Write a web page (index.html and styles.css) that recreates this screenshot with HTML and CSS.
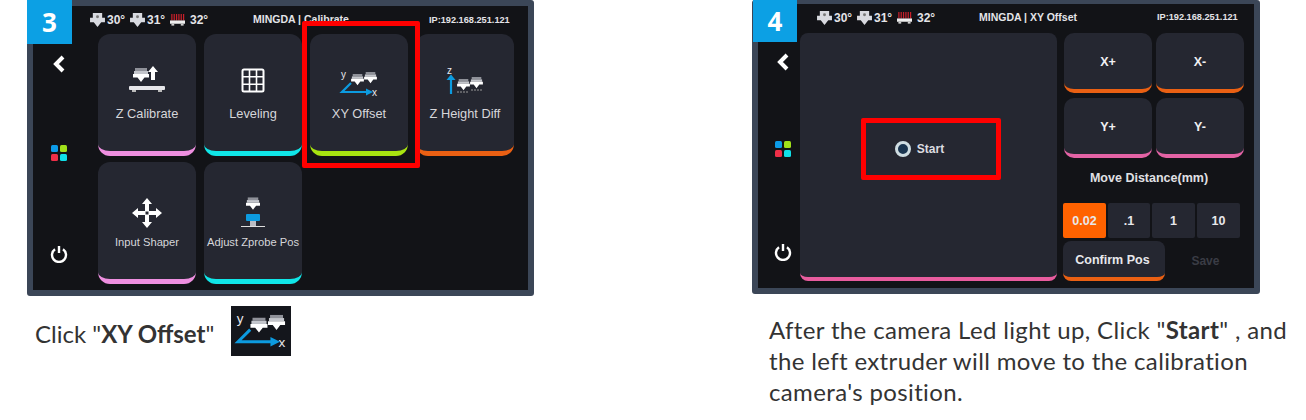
FILE: index.html
```html
<!DOCTYPE html>
<html lang="en">
<head>
    <meta charset="UTF-8">
    <meta name="viewport" content="width=device-width, initial-scale=1.0">
    <title>XY Offset Calibration</title>
    <link rel="stylesheet" href="styles.css">
</head>
<body>
    <!-- Shared icon parts -->
    <svg class="defs" width="0" height="0">
        <symbol id="nozzle" viewBox="0 0 16 15">
            <rect x="2" y="0" width="12" height="3" fill="#8f9199"/>
            <rect x="1" y="3" width="14" height="3" fill="#c4c6cc"/>
            <path d="M0 6h16v3.500h-4.500L8 14 4.500 9.500H0z" fill="#fff"/>
        </symbol>
        <symbol id="temp-nozzle" viewBox="0 0 16 15">
            <path d="M3 0h10v5h3v5h-4l-4 5-4-5H0V5h3z" fill="#d8dae0"/>
            <circle cx="8" cy="4" r="1.600" fill="#777"/>
        </symbol>
        <symbol id="temp-bed" viewBox="0 0 16 13">
            <path d="M2 0v7M4.500 0v7M7 0v7M9.500 0v7M12 0v7M14.500 0v7" stroke="#c8202a" stroke-width="1.300"/>
            <rect x="0" y="7" width="16" height="3.500" fill="#eee"/>
            <rect x="1.500" y="10.500" width="3" height="2" fill="#ccc"/>
            <rect x="11.500" y="10.500" width="3" height="2" fill="#ccc"/>
        </symbol>
        <symbol id="xy-icon" viewBox="0 0 40 28">
            <use href="#nozzle" x="12" y="4" width="13" height="12"/>
            <use href="#nozzle" x="25" y="2" width="13" height="12"/>
            <path d="M12 13 3 22H28" fill="none" stroke="#0c9be0" stroke-width="2.200"/>
            <path d="M27 18.500 34 22 27 25.500z" fill="#0c9be0"/>
        </symbol>
    </svg>

    <div class="steps">
        <!-- Step 3 -->
        <section class="step step-left">
            <div class="panel panel-calibrate">
                <div class="badge">3</div>
                <div class="topbar">
                    <div class="temps">
                        <svg class="t-icon"><use href="#temp-nozzle"/></svg><span class="t-val">30°</span>
                        <svg class="t-icon"><use href="#temp-nozzle"/></svg><span class="t-val">31°</span>
                        <svg class="t-icon"><use href="#temp-bed"/></svg><span class="t-val bed-val">32°</span>
                    </div>
                    <div class="title">MINGDA | Calibrate</div>
                    <div class="ip">IP:192.168.251.121</div>
                </div>
                <div class="body">
                    <div class="sidebar">
                        <svg class="back" width="14" height="18" viewBox="0 0 14 18"><path d="M11 2 4 9l7 7" fill="none" stroke="#fff" stroke-width="4"/></svg>
                        <div class="apps"><i class="c-blue"></i><i class="c-lime"></i><i class="c-red"></i><i class="c-cyan"></i></div>
                        <svg class="power" width="18" height="18" viewBox="0 0 18 18"><path d="M5 4.200a7 7 0 1 0 8 0" fill="none" stroke="#fff" stroke-width="2.400"/><path d="M9 1v7" stroke="#fff" stroke-width="2.400"/></svg>
                    </div>
                    <div class="menu">
                        <div class="tile bar-pink">
                            <svg class="tile-icon" viewBox="0 0 44 34">
                                <use href="#nozzle" x="8" y="4" width="16" height="15"/>
                                <path d="M26 16V8h-3l5-6 5 6h-3v8z" fill="#fff"/>
                                <rect x="4" y="22" width="36" height="4" rx="1" fill="#e6e6ea"/>
                                <rect x="7" y="26" width="4" height="2" fill="#bbb"/>
                                <rect x="33" y="26" width="4" height="2" fill="#bbb"/>
                            </svg>
                            <div class="tile-label">Z Calibrate</div>
                        </div>
                        <div class="tile bar-cyan">
                            <svg class="tile-icon" viewBox="0 0 44 34">
                                <rect x="11.500" y="5.500" width="21" height="22" rx="1.500" fill="none" stroke="#fff" stroke-width="2"/>
                                <path d="M18.500 5.500v22M25.500 5.500v22M11.500 12.800h21M11.500 20.200h21" stroke="#fff" stroke-width="1.600"/>
                            </svg>
                            <div class="tile-label">Leveling</div>
                        </div>
                        <div class="tile bar-lime">
                            <svg class="tile-icon xy-small" viewBox="0 0 40 28">
                                <use href="#xy-icon"/>
                                <text x="2" y="8" class="axis">y</text>
                                <text x="33" y="25.500" class="axis">x</text>
                            </svg>
                            <div class="tile-label">XY Offset</div>
                        </div>
                        <div class="tile bar-orange">
                            <svg class="tile-icon" viewBox="0 0 44 34">
                                <text x="4" y="10" class="axis">z</text>
                                <path d="M8 30V15" stroke="#0c9be0" stroke-width="2.200"/>
                                <path d="M3.500 16 8 10.500 12.500 16z" fill="#0c9be0"/>
                                <use href="#nozzle" x="14" y="15" width="13" height="12"/>
                                <use href="#nozzle" x="27" y="13" width="13" height="12"/>
                                <path d="M14 28h12M28 26h12" stroke="#999" stroke-width="1" stroke-dasharray="2 1"/>
                            </svg>
                            <div class="tile-label">Z Height Diff</div>
                        </div>
                        <div class="tile bar-pink">
                            <svg class="tile-icon low" viewBox="0 0 44 34">
                                <path d="M22 2l5 6h-3v7h7v-3l6 5-6 5v-3h-7v7h3l-5 6-5-6h3v-7h-7v3l-6-5 6-5v3h7V8h-3z" fill="#fff"/>
                                <rect x="20.500" y="15.500" width="3" height="3" fill="#252731"/>
                            </svg>
                            <div class="tile-label label-sm">Input Shaper</div>
                        </div>
                        <div class="tile bar-cyan">
                            <svg class="tile-icon low" viewBox="0 0 44 34">
                                <use href="#nozzle" x="15" y="1" width="14" height="14"/>
                                <rect x="15" y="18" width="14" height="7" rx="1" fill="#0c9be0"/>
                                <rect x="19" y="25" width="6" height="5" fill="#b9bbc2"/>
                                <path d="M10 30.500h24" stroke="#ddd" stroke-width="1"/>
                            </svg>
                            <div class="tile-label label-sm">Adjust Zprobe Pos</div>
                        </div>
                    </div>
                </div>
                <div class="mark mark-xy"></div>
            </div>
            <div class="caption caption-row">
                <p>Click "<b>XY Offset</b>"</p>
                <div class="thumb">
                    <svg class="thumb-icon" viewBox="0 0 40 28">
                        <use href="#xy-icon"/>
                        <text x="2" y="8" class="axis">y</text>
                        <text x="33" y="25.500" class="axis">x</text>
                    </svg>
                </div>
            </div>
        </section>

        <!-- Step 4 -->
        <section class="step step-right">
            <div class="panel panel-offset">
                <div class="badge">4</div>
                <div class="topbar">
                    <div class="temps">
                        <svg class="t-icon"><use href="#temp-nozzle"/></svg><span class="t-val">30°</span>
                        <svg class="t-icon"><use href="#temp-nozzle"/></svg><span class="t-val">31°</span>
                        <svg class="t-icon"><use href="#temp-bed"/></svg><span class="t-val bed-val">32°</span>
                    </div>
                    <div class="title">MINGDA | XY Offset</div>
                    <div class="ip">IP:192.168.251.121</div>
                </div>
                <div class="body">
                    <div class="sidebar">
                        <svg class="back" width="14" height="18" viewBox="0 0 14 18"><path d="M11 2 4 9l7 7" fill="none" stroke="#fff" stroke-width="4"/></svg>
                        <div class="apps"><i class="c-blue"></i><i class="c-lime"></i><i class="c-red"></i><i class="c-cyan"></i></div>
                        <svg class="power" width="18" height="18" viewBox="0 0 18 18"><path d="M5 4.200a7 7 0 1 0 8 0" fill="none" stroke="#fff" stroke-width="2.400"/><path d="M9 1v7" stroke="#fff" stroke-width="2.400"/></svg>
                    </div>
                    <div class="camera">
                        <div class="radio"></div>
                        <span>Start</span>
                    </div>
                    <div class="controls">
                        <div class="moves">
                            <div class="move bar-orange">X+</div>
                            <div class="move bar-orange">X-</div>
                            <div class="move bar-rose">Y+</div>
                            <div class="move bar-rose">Y-</div>
                        </div>
                        <div class="dist-title">Move Distance(mm)</div>
                        <div class="dists">
                            <div class="dist active">0.02</div>
                            <div class="dist">.1</div>
                            <div class="dist">1</div>
                            <div class="dist">10</div>
                        </div>
                        <div class="actions">
                            <div class="confirm bar-orange">Confirm Pos</div>
                            <div class="save">Save</div>
                        </div>
                    </div>
                </div>
                <div class="mark mark-start"></div>
            </div>
            <div class="caption caption-text">
                <p>After the camera Led light up, Click "<b>Start</b>" , and<br>the left extruder will move to the calibration<br>camera's position.</p>
            </div>
        </section>
    </div>
</body>
</html>
```

FILE: styles.css
```css
body {
    margin: 0;
    background-color: #fff;
    font-family: "Liberation Sans", Arial, sans-serif;
}

.defs {
    position: absolute;
}

.axis {
    font-family: "Liberation Sans", Arial, sans-serif;
    font-size: 10px;
    fill: #e8e8ec;
}

.steps {
    display: flex;
    padding-left: 27px;
    gap: 218px;
}

.step {
    width: 507px;
}

.step-right {
    width: 508px;
}

/* Screen frame */
.panel {
    position: relative;
    box-sizing: border-box;
    display: flex;
    flex-direction: column;
    border: 6px solid #3b4657;
    border-radius: 3px;
    background-color: #121317;
    color: #fff;
}

.panel-calibrate {
    height: 296px;
}

.panel-offset {
    height: 294px;
    border-top-width: 4px;
}

.badge {
    position: absolute;
    left: -6px;
    top: -6px;
    width: 45px;
    height: 44px;
    background-color: #0ca0e4;
    font-family: "Open Sans", sans-serif;
    font-size: 26px;
    font-weight: 700;
    line-height: 44px;
    text-align: center;
}

.panel-offset .badge {
    left: -5px;
    top: -4px;
    height: 42px;
    width: 44px;
    line-height: 42px;
}

/* Top bar */
.topbar {
    display: grid;
    grid-template-columns: 163px 176px auto;
    align-items: center;
    height: 28px;
    padding-left: 57px;
    color: #e4e4e8;
    font-weight: 700;
}

.panel-offset .topbar {
    grid-template-columns: 162px 178px auto;
    height: 29px;
    padding-left: 59px;
    padding-bottom: 2px;
    box-sizing: border-box;
}

.temps {
    display: flex;
    align-items: center;
    font-size: 12px;
}

.t-icon {
    width: 15px;
    height: 14px;
    margin-right: 2px;
}

.t-val {
    margin-right: 3px;
    width: 20px;
}

.bed-val {
    margin-left: 3px;
}

.title {
    font-size: 10.500px;
    margin-top: -2px;
}

.ip {
    font-size: 9.200px;
    margin-top: -1px;
}

.body {
    display: flex;
    flex: 1;
}

/* Left rail */
.sidebar {
    box-sizing: border-box;
    display: flex;
    flex-direction: column;
    align-items: center;
    flex-shrink: 0;
    width: 65px;
    padding: 21px 13px 27px 0;
}

.panel-offset .sidebar {
    width: 42px;
    padding: 20px 0 27px 8px;
}

.apps {
    display: grid;
    grid-template-columns: 7px 7px;
    grid-auto-rows: 7px;
    gap: 2px;
    margin-top: 72px;
}

.panel-offset .apps {
    margin-top: 70px;
}

.apps i {
    border-radius: 1.500px;
}

.c-blue { background-color: #0c9be8; }
.c-lime { background-color: #a0e01a; }
.c-red { background-color: #ef2f48; }
.c-cyan { background-color: #10e0e8; }

.power {
    margin-top: auto;
}

/* Calibrate menu */
.menu {
    display: grid;
    grid-template-columns: repeat(4, 98px);
    grid-auto-rows: 122px;
    gap: 6px 8px;
}

.tile {
    box-sizing: border-box;
    background-color: #252731;
    border-radius: 12px;
    border-bottom: 5px solid;
    padding-top: 30px;
    text-align: center;
}

.tile-icon {
    display: block;
    width: 44px;
    height: 34px;
    margin: 0 auto;
}

.xy-small {
    width: 40px;
    height: 28px;
    margin-top: 6px;
}

.tile-icon.low {
    margin-top: 4px;
    margin-bottom: -4px;
}

.tile-label {
    margin-top: 8px;
    color: #d6d6da;
    font-size: 12.800px;
    line-height: 16px;
    white-space: nowrap;
}

.label-sm {
    font-size: 11.200px;
}

/* XY offset screen */
.camera {
    box-sizing: border-box;
    display: flex;
    align-items: center;
    justify-content: center;
    gap: 6px;
    width: 257px;
    height: 248px;
    padding: 0 18px 13px 0;
    background-color: #252731;
    border-radius: 8px;
    border-bottom: 4px solid #e85c9e;
    font-size: 12px;
    font-weight: 700;
    color: #dcdce0;
}

.radio {
    box-sizing: border-box;
    width: 16px;
    height: 16px;
    border: 3px solid #cfdde2;
    border-radius: 50%;
    background-color: #1a3550;
}

.controls {
    width: 183px;
    margin-left: 6px;
}

.moves {
    display: grid;
    grid-template-columns: 88px 88px;
    grid-auto-rows: 60px;
    gap: 5px 4px;
    margin-left: 1px;
}

.move {
    box-sizing: border-box;
    display: flex;
    align-items: center;
    justify-content: center;
    padding-top: 2px;
    background-color: #252731;
    border-radius: 10px;
    border-bottom: 4px solid;
    font-size: 12.500px;
    font-weight: 700;
    color: #f0f0f2;
}

.dist-title {
    margin-top: 12px;
    height: 16px;
    margin-right: 11px;
    color: #e0e0e4;
    font-size: 12.500px;
    font-weight: 700;
    line-height: 16px;
    text-align: center;
}

.dists {
    display: grid;
    grid-template-columns: 43px 42px 43px 43px;
    grid-auto-rows: 35px;
    gap: 2px;
    margin-top: 17px;
}

.dist {
    display: flex;
    align-items: center;
    justify-content: center;
    background-color: #252731;
    border-radius: 2px;
    font-size: 12.500px;
    font-weight: 700;
    color: #e8e8ec;
}

.dist.active {
    background-color: #ff6200;
}

.actions {
    display: flex;
    margin-top: 3px;
    height: 40px;
}

.confirm {
    box-sizing: border-box;
    display: flex;
    align-items: center;
    justify-content: center;
    width: 103px;
    padding: 1px 3px 0 0;
    background-color: #252731;
    border-radius: 8px;
    border-bottom: 4px solid;
    font-size: 12.500px;
    font-weight: 700;
    color: #e8e8ec;
}

.save {
    display: flex;
    align-items: center;
    justify-content: center;
    width: 82px;
    font-size: 12px;
    font-weight: 700;
    color: #3a3c45;
}

/* Bottom bar colours */
.bar-pink { border-bottom-color: #ee8fe0; }
.bar-cyan { border-bottom-color: #10e6e8; }
.bar-lime { border-bottom-color: #a8e410; }
.bar-orange { border-bottom-color: #ea6013; }
.bar-rose { border-bottom-color: #e463a5; }

/* Red highlight boxes */
.mark {
    position: absolute;
    box-sizing: border-box;
    border: 5px solid #f00;
    border-radius: 2px;
}

.mark-xy {
    left: 269px;
    top: 15px;
    width: 118px;
    height: 147px;
}

.mark-start {
    left: 103px;
    top: 114px;
    width: 140px;
    height: 62px;
}

/* Captions */
.caption {
    color: #333;
    font-family: Lato, sans-serif;
    font-size: 24px;
}

.caption p {
    margin: 0;
}

.caption-row {
    display: flex;
    align-items: flex-start;
    gap: 17px;
    margin-top: 10px;
    padding-left: 8px;
}

.caption-row p {
    margin-top: 10px;
    line-height: 36px;
}

.thumb {
    width: 60px;
    height: 50px;
    background-color: #14161c;
    display: flex;
    align-items: center;
    justify-content: center;
}

.thumb-icon {
    width: 54px;
    height: 38px;
}

.caption-text {
    margin-top: 20px;
    padding-left: 17px;
    line-height: 31px;
    letter-spacing: 0.360px;
    white-space: nowrap;
}
```
